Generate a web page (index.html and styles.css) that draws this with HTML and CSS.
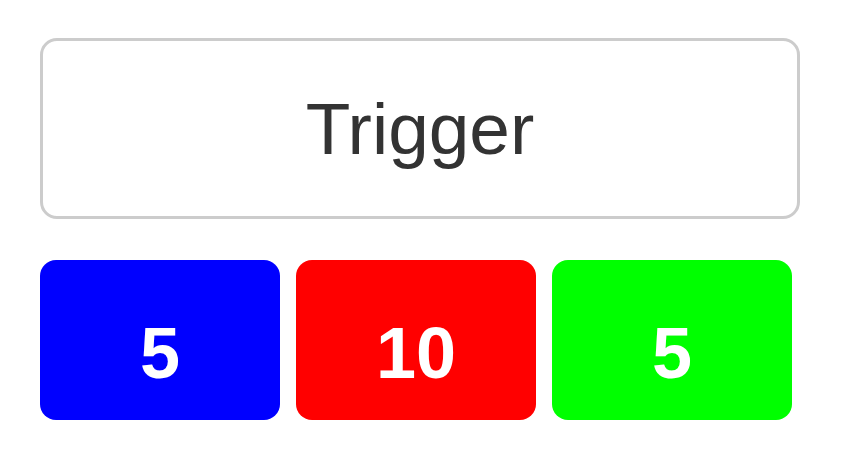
FILE: index.html
```html
<!DOCTYPE html>
<html>
<head>
<meta charset="utf-8">
<link rel="stylesheet" href="styles.css">
</head>
<body>
<div class="page">
  <button class="trigger">Trigger</button>
  <div class="tiles">
    <div class="tile tile-blue">5</div>
    <div class="tile tile-red">10</div>
    <div class="tile tile-green">5</div>
  </div>
</div>
</body>
</html>
```
FILE: styles.css
```css
html, body {
  margin: 0;
  padding: 0;
  background: #fff;
}
.page {
  padding: 38px 40px 0 40px;
  font-family: "Liberation Sans", Arial, sans-serif;
}
.trigger {
  display: flex;
  align-items: center;
  justify-content: center;
  box-sizing: border-box;
  width: 760px;
  height: 181px;
  margin: 0;
  padding: 0;
  background: #fff;
  border: 3px solid #cccccc;
  border-radius: 17px;
  font-family: "Liberation Sans", Arial, sans-serif;
  font-size: 73px;
  color: #333333;
}
.tiles {
  display: flex;
  gap: 16px;
  margin-top: 41px;
}
.tile {
  box-sizing: border-box;
  width: 240px;
  height: 160px;
  border-radius: 16px;
  display: flex;
  align-items: center;
  justify-content: center;
  padding-top: 25px;
  color: #fff;
  font-weight: bold;
  font-size: 72px;
}
.tile-blue { background: #0000ff; }
.tile-red { background: #ff0000; }
.tile-green { background: #00ff00; }
```
